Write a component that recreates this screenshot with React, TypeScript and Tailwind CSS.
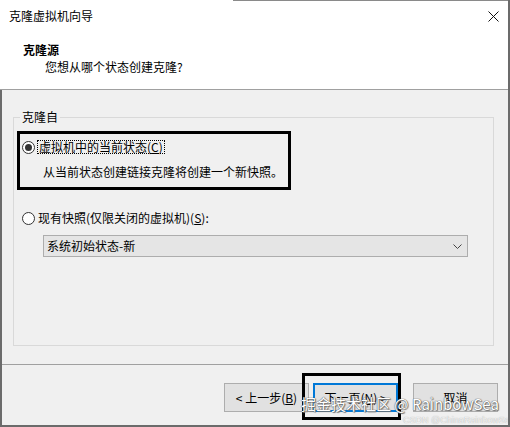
import React from "react";

const font = { fontFamily: '"Noto Sans CJK SC", "Microsoft YaHei", sans-serif' };

function Radio({ checked }: { checked?: boolean }) {
  return (
    <span className="w-[13px] h-[13px] rounded-full border border-[#333333] bg-white flex items-center justify-center shrink-0">
      {checked && <span className="w-[7px] h-[7px] rounded-full bg-[#333333]" />}
    </span>
  );
}

export default function App() {
  return (
    <div
      className="relative w-[510px] h-[427px] overflow-hidden bg-white flex flex-col border-r-2 border-[#6b6b6b] text-[12px] leading-[16px] text-black"
      style={font}
    >
      {/* top edge */}
      <div className="h-px flex shrink-0">
        <div className="ml-[233px] flex-1 bg-[#8a8a8a]" />
      </div>

      {/* header */}
      <div className="h-[89px] shrink-0 bg-white border-b border-[#a0a0a0] flex flex-col">
        <div className="h-[30px] flex items-center justify-between pl-[9px] pr-[9px]">
          <span>克隆虚拟机向导</span>
          <svg width="11" height="11" viewBox="0 0 11 11" className="shrink-0">
            <path d="M0.5 0.5 L10.5 10.5 M10.5 0.5 L0.5 10.5" stroke="#111" strokeWidth="1" fill="none" />
          </svg>
        </div>
        <div className="mt-[11px] ml-[23px] font-bold">克隆源</div>
        <div className="mt-[1px] ml-[45px]">您想从哪个状态创建克隆?</div>
      </div>

      {/* lower */}
      <div className="flex-1 flex flex-col bg-[#f0f0f0] border-l-2 border-b-2 border-[#6b6b6b]">
        <div className="h-[274px] shrink-0 flex flex-col">
          <fieldset className="mt-[19px] ml-[11px] w-[481px] h-[237px] border border-[#d9d9d9] flex flex-col">
            <legend className="ml-[6px] px-[2px]">克隆自</legend>
            <div className="mt-[6px] ml-[3px] w-[274px] h-[59px] border-[3px] border-black flex flex-col">
              <div className="mt-[5px] h-[16px] flex items-center">
                <span className="ml-[2px]">
                  <Radio checked />
                </span>
                <span className="ml-[2px] px-[1px] border border-dotted border-black leading-[12px] h-[14px] flex items-center">
                  虚拟机中的当前状态(<span className="underline">C</span>)
                </span>
              </div>
              <div className="mt-[9px] ml-[23px]">从当前状态创建链接克隆将创建一个新快照。</div>
            </div>
            <div className="mt-[20px] h-[16px] flex items-center ml-[8px]">
              <Radio />
              <span className="ml-[3px]">
                现有快照(仅限关闭的虚拟机)(<span className="underline">S</span>):
              </span>
            </div>
            <div className="mt-[9px] ml-[29px] w-[425px] h-[22px] bg-[#e5e5e5] border border-[#adadad] flex items-center justify-between pl-[3px] pr-[5px]">
              <span>系统初始状态-新</span>
              <svg width="9" height="5" viewBox="0 0 9 5">
                <path d="M0.5 0.5 L4.5 4.5 L8.5 0.5" stroke="#444" strokeWidth="1" fill="none" />
              </svg>
            </div>
          </fieldset>
        </div>

        <div className="flex-1 border-t border-[#a0a0a0] flex justify-end items-start pt-[18px] pr-[10px]">
          <button className="w-[85px] h-[29px] bg-[#e1e1e1] border border-[#adadad] flex items-center justify-center">
            &lt; 上一步(<span className="underline">B</span>)
          </button>
          <button className="ml-[4px] w-[85px] h-[29px] bg-[#e1e1e1] border-2 border-[#0078d7] flex items-center justify-center">
            下一页(<span className="underline">N</span>) &gt;
          </button>
          <button className="ml-[15px] w-[85px] h-[29px] bg-[#e1e1e1] border border-[#adadad] flex items-center justify-center">
            取消
          </button>
        </div>
      </div>

      {/* annotation rectangle */}
      <div className="absolute left-[302px] top-[373px] w-[99px] h-[47px] border-[3px] border-black pointer-events-none" />

      {/* watermarks */}
      <div
        className="absolute left-[301px] top-[395px] text-[15px] leading-[18px] text-white whitespace-nowrap [text-shadow:0_0_1px_#555,0_0_1px_#555,1px_1px_1px_#777]"
        style={{ fontFamily: '"Noto Sans CJK SC", "Liberation Sans", sans-serif' }}
      >
        掘金技术社区 @ RainbowSea
      </div>
      <div
        className="absolute left-[403px] top-[415px] text-[9px] leading-[10px] text-[#f4f4f4] whitespace-nowrap [text-shadow:0_0_1px_#999]"
        style={{ fontFamily: '"Liberation Sans", sans-serif' }}
      >
        CSDN @ChinaRainbowSea
      </div>
    </div>
  );
}
